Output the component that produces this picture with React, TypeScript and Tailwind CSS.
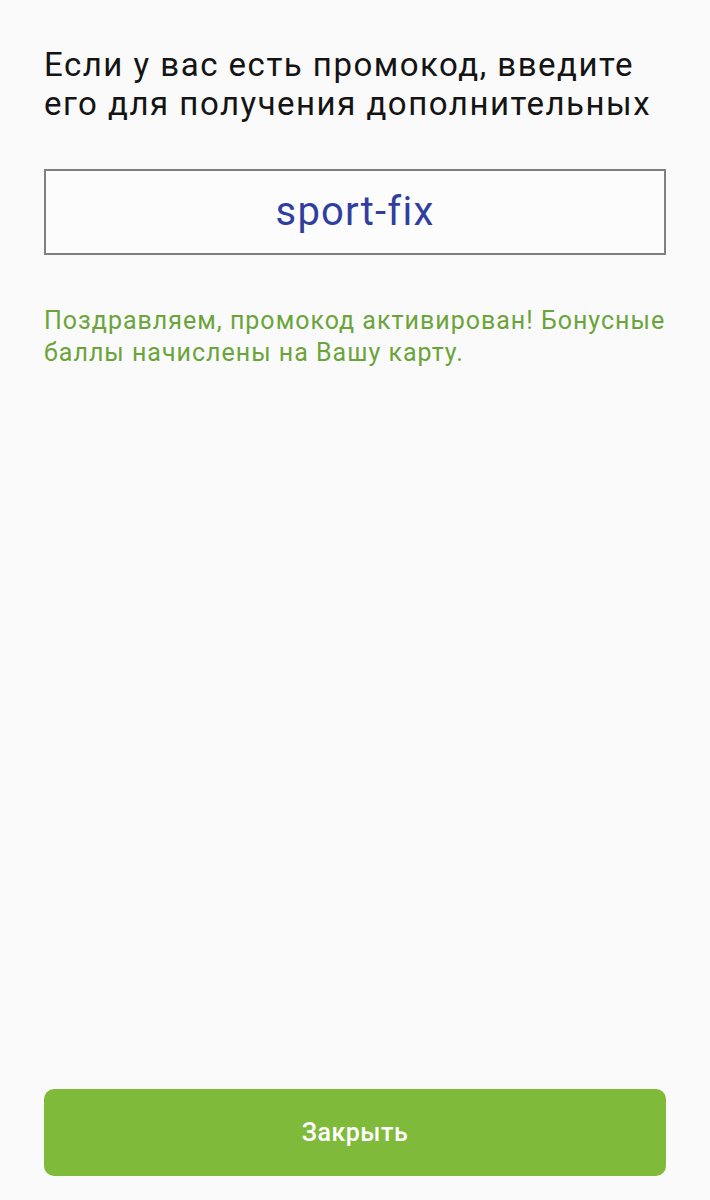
export default function App() {
  return (
    <div className="flex min-h-[1200px] flex-col bg-[#fafafa] px-[44px] pb-[24px] pt-[45px] font-['Roboto',sans-serif]">
      <h1 className="text-[33px] leading-[39px] font-normal tracking-[1.5px] text-[#141414]">
        Если у вас есть промокод, введите его для получения дополнительных
      </h1>

      <div className="mt-[46px] flex h-[86px] items-center justify-center border-2 border-[#808080] bg-[#fcfcfc]">
        <span className="text-[40px] tracking-[1.2px] text-[#303f9f]">sport-fix</span>
      </div>

      <p className="mt-[50px] text-[25px] leading-[32px] tracking-[1px] text-[#6aa43a]">
        Поздравляем, промокод активирован! Бонусные баллы начислены на Вашу карту.
      </p>

      <div className="flex-1" />

      <button className="flex h-[87px] w-full items-center justify-center rounded-[10px] bg-[#7fba3b] text-[25px] font-medium tracking-[0.5px] text-white">
        Закрыть
      </button>
    </div>
  );
}
